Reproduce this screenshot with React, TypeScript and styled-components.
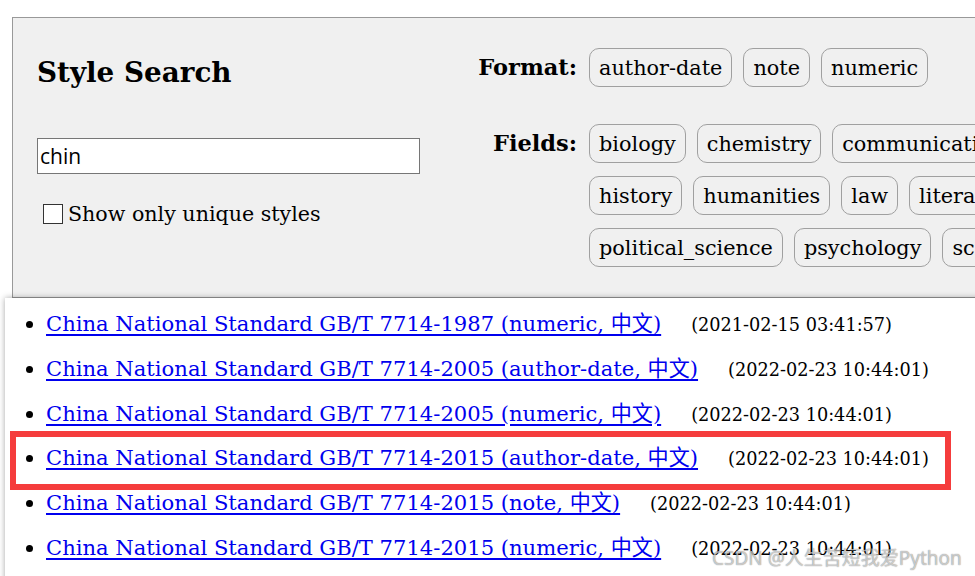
import React from "react";
import styled, { createGlobalStyle } from "styled-components";

const GlobalStyle = createGlobalStyle`
  html, body {
    margin: 0;
    padding: 0;
    background: #ffffff;
    overflow: hidden;
  }
  body {
    width: 975px;
    height: 576px;
    font-family: "DejaVu Serif", Georgia, serif;
    color: #000;
  }
`;

const Page = styled.div`
  position: relative;
  width: 975px;
  height: 576px;
  overflow: hidden;
  padding-top: 17px;
  box-sizing: border-box;
`;

const SearchPanel = styled.section`
  margin-left: 12px;
  width: 1200px;
  height: 281px;
  box-sizing: border-box;
  background: #f0f0f0;
  border: 1px solid #999;
  display: flex;
`;

const LeftColumn = styled.div`
  flex: 0 0 440px;
  padding-left: 24px;
  box-sizing: border-box;
  display: flex;
  flex-direction: column;
`;

const Title = styled.h1`
  margin: 38px 0 0 0;
  font-size: 27.8px;
  line-height: 34px;
  font-weight: bold;
`;

const SearchInput = styled.input`
  margin-top: 48px;
  width: 383px;
  height: 36px;
  box-sizing: border-box;
  border: 1px solid #767676;
  background: #fff;
  padding: 0 2px;
  font-family: "Open Sans", "Noto Sans", sans-serif;
  font-size: 21px;
  color: #000;
  outline: none;
`;

const CheckRow = styled.label`
  margin-top: 28px;
  margin-left: 6px;
  display: flex;
  align-items: center;
  gap: 5px;
  font-size: 20.6px;
  line-height: 24px;
`;

const CheckBox = styled.input`
  appearance: none;
  margin: 0;
  width: 20px;
  height: 20px;
  box-sizing: border-box;
  border: 1px solid #333;
  background: #fff;
`;

const FilterColumn = styled.div`
  margin-left: 22px;
  padding-top: 30px;
  display: flex;
  flex-direction: column;
  gap: 37px;
`;

const FilterRow = styled.div`
  display: flex;
  gap: 12px;
  align-items: flex-start;
`;

const FilterLabel = styled.div`
  flex: 0 0 102px;
  font-weight: bold;
  font-size: 22.5px;
  line-height: 39px;
  text-align: right;
  white-space: nowrap;
`;

const TagGroup = styled.div`
  display: flex;
  flex-direction: column;
  gap: 13px;
`;

const TagRow = styled.div`
  display: flex;
  gap: 11px;
  white-space: nowrap;
`;

const Tag = styled.span`
  display: inline-flex;
  align-items: center;
  height: 39px;
  box-sizing: border-box;
  padding: 0 9px;
  border: 1px solid #a0a0a0;
  border-radius: 10px;
  font-size: 20.8px;
`;

const ResultsPanel = styled.section`
  margin-left: 5px;
  width: 1100px;
  height: 400px;
  background: #fff;
  box-shadow: 0 0 6px rgba(0, 0, 0, 0.35);
  padding-top: 4px;
  box-sizing: border-box;
`;

const ResultList = styled.ul`
  margin: 0;
  padding-left: 41px;
  list-style: disc;
`;

const ResultItem = styled.li`
  height: 44.8px;
  line-height: 44.8px;
  font-size: 21.1px;
  white-space: nowrap;
`;

const ResultLink = styled.a`
  color: #0000ee;
  text-decoration: underline;
  text-underline-offset: 3px;
  font-family: "DejaVu Serif", "Noto Sans CJK SC", serif;
`;

const Stamp = styled.span<{ $gap: number }>`
  margin-left: ${(p) => p.$gap}px;
  font-size: 17.7px;
  color: #000;
`;

const Highlight = styled.div`
  position: absolute;
  left: 10px;
  top: 431px;
  width: 941px;
  height: 59px;
  box-sizing: border-box;
  border: 6px solid #f53c3c;
  pointer-events: none;
`;

const Watermark = styled.div`
  position: absolute;
  left: 712px;
  top: 543px;
  font-family: "Noto Sans", "Noto Sans CJK SC", sans-serif;
  font-size: 19px;
  color: rgba(255, 255, 255, 0.6);
  text-shadow: 0 0 1px rgba(0, 0, 0, 0.6);
  white-space: nowrap;
  pointer-events: none;
`;

const formats = ["author-date", "note", "numeric"];
const fieldRows = [
  ["biology", "chemistry", "communications", "engineering"],
  ["history", "humanities", "law", "literature", "linguistics"],
  ["political_science", "psychology", "science", "sociology"],
];

const results = [
  { title: "China National Standard GB/T 7714-1987 (numeric, 中文)", date: "(2021-02-15 03:41:57)" },
  { title: "China National Standard GB/T 7714-2005 (author-date, 中文)", date: "(2022-02-23 10:44:01)" },
  { title: "China National Standard GB/T 7714-2005 (numeric, 中文)", date: "(2022-02-23 10:44:01)" },
  { title: "China National Standard GB/T 7714-2015 (author-date, 中文)", date: "(2022-02-23 10:44:01)" },
  { title: "China National Standard GB/T 7714-2015 (note, 中文)", date: "(2022-02-23 10:44:01)" },
  { title: "China National Standard GB/T 7714-2015 (numeric, 中文)", date: "(2022-02-23 10:44:01)" },
];

export default function App() {
  return (
    <>
      <GlobalStyle />
      <Page>
        <SearchPanel>
          <LeftColumn>
            <Title>Style Search</Title>
            <SearchInput defaultValue="chin" />
            <CheckRow>
              <CheckBox type="checkbox" />
              Show only unique styles
            </CheckRow>
          </LeftColumn>
          <FilterColumn>
            <FilterRow>
              <FilterLabel>Format:</FilterLabel>
              <TagRow>
                {formats.map((f) => (
                  <Tag key={f}>{f}</Tag>
                ))}
              </TagRow>
            </FilterRow>
            <FilterRow>
              <FilterLabel>Fields:</FilterLabel>
              <TagGroup>
                {fieldRows.map((row, i) => (
                  <TagRow key={i}>
                    {row.map((f) => (
                      <Tag key={f}>{f}</Tag>
                    ))}
                  </TagRow>
                ))}
              </TagGroup>
            </FilterRow>
          </FilterColumn>
        </SearchPanel>
        <ResultsPanel>
          <ResultList>
            {results.map((r, i) => (
              <ResultItem key={i}>
                <ResultLink href="#">{r.title}</ResultLink>
                <Stamp $gap={30}>{r.date}</Stamp>
              </ResultItem>
            ))}
          </ResultList>
        </ResultsPanel>
        <Highlight />
        <Watermark>CSDN @人生苦短我爱Python</Watermark>
      </Page>
    </>
  );
}
